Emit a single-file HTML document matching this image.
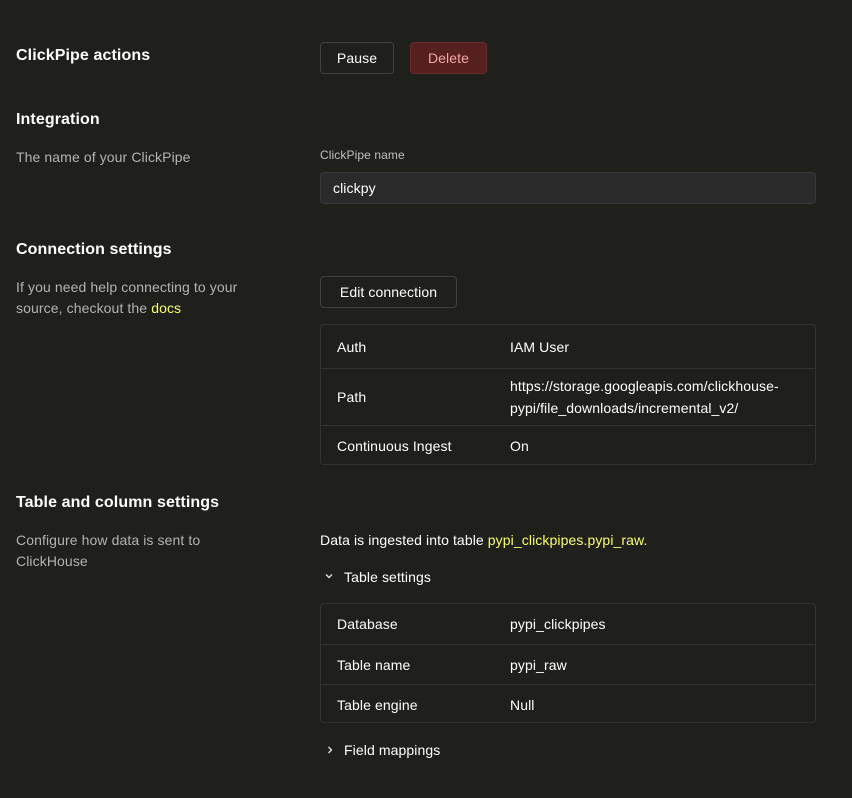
<!DOCTYPE html>
<html><head><style>
body{margin:0;width:852px;height:798px;background:#1f1f1c;font-family:"Liberation Sans",sans-serif;color:#fff;position:relative;overflow:hidden;letter-spacing:0.1px}
.a{position:absolute;white-space:nowrap}
h{position:absolute;font-weight:bold;font-size:16px;color:#fff;left:16px}
.d{position:absolute;left:16px;font-size:14px;color:#b3b3b3;line-height:21px}
.btn{position:absolute;border:1px solid #414141;border-radius:4px;font-size:14px;display:flex;align-items:center;justify-content:center;box-sizing:border-box}
.tbl{position:absolute;left:320px;width:496px;border:1px solid #333331;border-radius:4px;box-sizing:border-box}
.r{position:relative;border-top:1px solid #333331;font-size:14px}
.r:first-child{border-top:none}
.r span{position:absolute;left:16px;top:50%;transform:translateY(-50%)}
.r b{font-weight:normal;position:absolute;left:189px;top:50%;transform:translateY(-50%);line-height:22px}
.y{color:#faff69}
</style></head><body>
<h style="top:47px">ClickPipe actions</h>
<div class="btn" style="left:320px;top:42px;width:74px;height:32px">Pause</div>
<div class="btn" style="left:410px;top:42px;width:77px;height:32px;background:#55201f;border-color:#6b2b2a;color:#f4a6a4">Delete</div>

<h style="top:111px">Integration</h>
<div class="d" style="top:147px">The name of your ClickPipe</div>
<div class="a" style="left:320px;top:148px;font-size:12px;color:#c0c0c0">ClickPipe name</div>
<div style="position:absolute;left:320px;top:172px;width:496px;height:32px;background:#2a2a2a;border:1px solid #383838;border-radius:4px;box-sizing:border-box;font-size:14px;padding:7px 12px">clickpy</div>

<h style="top:241px">Connection settings</h>
<div class="d" style="top:277px">If you need help connecting to your<br>source, checkout the <span class="y">docs</span></div>
<div class="btn" style="left:320px;top:276px;width:137px;height:32px">Edit connection</div>
<div class="tbl" style="top:324px;height:141px">
<div class="r" style="height:43px"><span>Auth</span><b>IAM User</b></div>
<div class="r" style="height:56px"><span>Path</span><b>https://storage.googleapis.com/clickhouse-<br>pypi/file_downloads/incremental_v2/</b></div>
<div class="r" style="height:40px"><span>Continuous Ingest</span><b>On</b></div>
</div>

<h style="top:494px">Table and column settings</h>
<div class="d" style="top:530px">Configure how data is sent to<br>ClickHouse</div>
<div class="a" style="left:320px;top:532px;font-size:14px">Data is ingested into table <span class="y">pypi_clickpipes.pypi_raw.</span></div>
<svg style="position:absolute;left:324px;top:572px" width="10" height="8" viewBox="0 0 10 8"><path d="M2 2.5L5 5.5L8 2.5" fill="none" stroke="#ddd" stroke-width="1.4"/></svg>
<div class="a" style="left:344px;top:569px;font-size:14px">Table settings</div>
<div class="tbl" style="top:603px;height:120px">
<div class="r" style="height:40px"><span>Database</span><b>pypi_clickpipes</b></div>
<div class="r" style="height:39px"><span>Table name</span><b>pypi_raw</b></div>
<div class="r" style="height:39px"><span>Table engine</span><b>Null</b></div>
</div>
<svg style="position:absolute;left:326px;top:745px" width="8" height="10" viewBox="0 0 8 10"><path d="M2.5 2L5.5 5L2.5 8" fill="none" stroke="#ddd" stroke-width="1.4"/></svg>
<div class="a" style="left:344px;top:742px;font-size:14px">Field mappings</div>
</body></html>
